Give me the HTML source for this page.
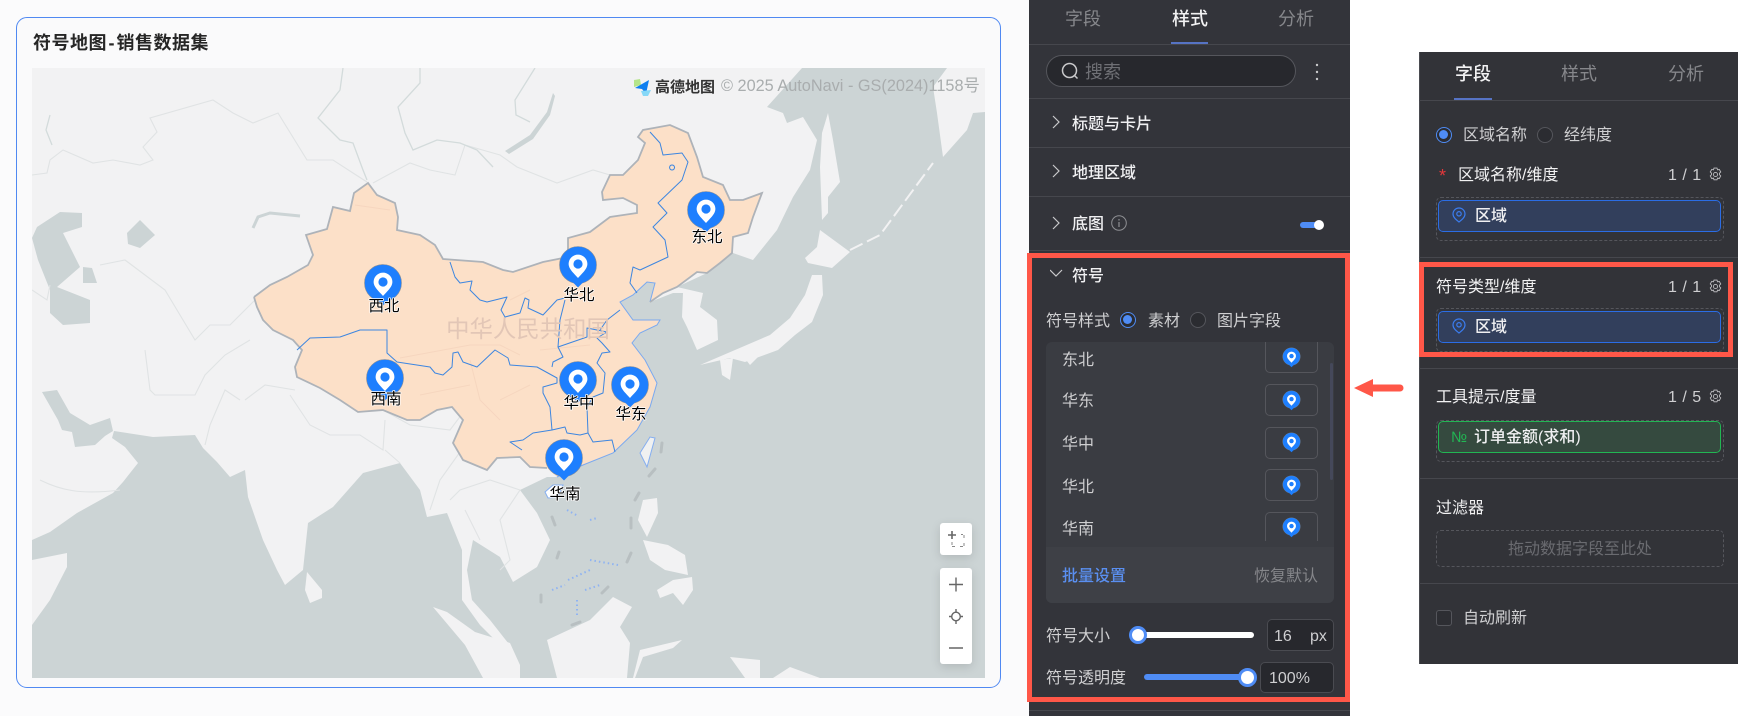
<!DOCTYPE html>
<html lang="zh-CN"><head><meta charset="utf-8"><title>符号地图</title>
<style>
html,body{margin:0;padding:0;background:#fff}
#r{position:relative;width:1738px;height:716px;overflow:hidden;background:#fff;font-family:"Liberation Sans","Noto Sans CJK SC",sans-serif;font-size:16px}
#r div,#r svg{position:absolute}
.t{white-space:nowrap;line-height:24px;height:24px;color:#cfcfd1;margin-top:2px}
.b{color:#f0f0f2;font-weight:500}
.w{color:#f2f2f3}
.s{height:1px;background:#46474d}
.d{border:1px dashed #55565c;border-radius:5px;box-sizing:border-box}
.pill{box-sizing:border-box;border:1px solid #2b6de5;background:#323f5c;border-radius:5px}
.box{box-sizing:border-box;border:1px solid #55565c;border-radius:5px}
.rad{box-sizing:border-box;width:16px;height:16px;border-radius:50%;border:1px solid #55565c;background:#2b2c31}
.on{border:1.500px solid #4f8cf5;background:#2b2c31}
.on:after{content:"";position:absolute;left:2px;top:2px;width:9px;height:9px;border-radius:50%;background:#4f8cf5}
.inp{box-sizing:border-box;background:#27282d;border:1px solid #4a4b51;border-radius:5px}
.thumb{box-sizing:border-box;border-radius:50%;background:#fff;border:3px solid #4f8cf5}
.red{box-sizing:border-box;border:5px solid #ff5748}
.tool{background:#fff;border-radius:3px;box-shadow:0 3px 10px rgba(0,0,0,.13)}
</style></head><body><div id="r">
<svg width="0" height="0" style="left:0;top:0"><defs>
<symbol id="pin" viewBox="-20 -20 40 44" overflow="visible">
<circle r="18.500" fill="#1e7ffe" stroke="#8a8f96" stroke-width=".6"/><path d="M-6 16.500L0 22.500L6 16.500z" fill="#1e7ffe"/>
<path d="M0 -10.400a9.400 9.400 0 0 1 9.400 9.400c0 5.200-6 10-9.400 14c-3.400-4-9.400-8.800-9.400-14a9.400 9.400 0 0 1 9.400-9.400z" fill="#fff"/><circle cy="-1" r="4.600" fill="#1e7ffe"/>
</symbol>
<symbol id="gear" viewBox="0 0 14 14"><path d="M5.600 1h2.800l.5 1.700 1.600-.5 1.400 2.400-1.200 1.200v1.400l1.200 1.200-1.400 2.400-1.600-.5-.5 1.700H5.600l-.5-1.700-1.600.5-1.400-2.400 1.200-1.200V5.800L2.100 4.600l1.400-2.400 1.600.5z" fill="none" stroke="#c2c2c5" stroke-width=".8"/><circle cx="7" cy="7" r="1.900" fill="none" stroke="#c2c2c5" stroke-width=".8"/></symbol>
<symbol id="loc" viewBox="0 0 14 16"><path d="M7 1a6 6 0 0 1 6 6c0 3.500-3.500 6-6 8c-2.500-2-6-4.500-6-8a6 6 0 0 1 6-6z" fill="none" stroke="#3b7df0" stroke-width="1.200"/><circle cx="7" cy="6.800" r="2.200" fill="none" stroke="#3b7df0" stroke-width="1.200"/></symbol>
</defs></svg>

<div style="left:0;top:0;width:1029px;height:716px;background:#fbfbfc"></div>
<div style="left:16px;top:17px;width:985px;height:671px;box-sizing:border-box;border:1.500px solid #5089f2;border-radius:11px;background:#fafafb"></div>
<div class="t" style="left:33px;top:29px;font-size:18px;font-weight:700;color:#262626;letter-spacing:.5px">符号地图<span style="margin:0 1.500px">-</span>销售数据集</div>

<svg style="left:32px;top:68px" width="953" height="610" viewBox="32 68 953 610">
<rect x="32" y="68" width="953" height="610" fill="#ccd4d5"/>
<g fill="#f2f2f3">
<path d="M32 68H802L767 107L783 113L787 123L803 117L817 140L810 170L793 197L777 230L753 260L733 253L707 273L677 287L703 293L700 307L717 320L718 340L697 350L687 327L682 317L683 293L673 293L650 302L655 283L647 282L633 295L620 302L633 320L660 320L657 325L640 333L632 343L645 360L657 383L650 407L637 430L613 453L583 465L557 477L547 477L520 490L537 513L550 540L537 567L513 582L500 557L473 540L467 570L472 600L490 620L512 648L505 650L480 625L462 600L462 550L447 513L427 517L420 490L400 463L363 473L333 507L308 523L303 570L285 585L277 570L263 540L248 497L245 470L230 477L217 462L203 448L195 435L153 437L114 431L112 438L125 447L138 463L123 482L113 493L77 513L50 532L32 540z"/>
<path d="M947 68H985V112L973 113L967 130L943 157L937 113L933 87z"/>
<path d="M32 560L67 553L67 567L50 600L32 625z"/>
<path d="M307 572L322 590L322 598L310 603L305 590z"/>
<path d="M433 607L447 612L475 632L510 643L520 665L520 678H483L465 645z"/>
<path d="M828 113L833 140L840 182L828 197L828 213L822 220L820 167L822 133z"/>
<path d="M820 230L850 252L832 268L808 263L805 258L817 247z"/>
<path d="M822 275L823 295L812 322L795 335L778 350L745 362L730 358L700 365L735 350L770 335L790 318L805 295L812 275z"/>
<path d="M720 360L733 358L730 380L722 375z"/><path d="M740 352L765 350L750 365z"/>
<path d="M643 500L657 498L658 513L647 537L638 520z"/><path d="M643 540L668 545L685 555L688 575L665 570L650 560z"/>
<path d="M657 590L673 580L692 577L693 590L683 605L673 593L660 598z"/>
<path d="M547 640L590 620L613 597L632 607L620 627L630 643L627 678H557z"/>
<path d="M640 650L682 640L673 648L643 657L635 678H633z"/>
<path d="M730 657L760 660L760 678H745z"/><path d="M773 678L790 667L820 678z"/>
<path d="M850 250L880 235L933 163" fill="none" stroke="#f2f2f3" stroke-width="2" stroke-dasharray="14 5"/>
</g>
<g fill="#ccd4d5">
<path d="M32 238L37 227L60 212L82 213L82 227L63 233L80 267L57 287L90 300L90 323L63 325L50 313L50 290L38 260z"/>
<path d="M127 233L140 220L155 235L140 248L128 244z"/><path d="M83 267L92 268L97 283H83z"/>
<path d="M42 392L57 390L70 413L90 425L110 418L113 431L105 436L95 445L75 447L72 432L62 430L58 420z"/>
<path d="M553 93L555 96L550 115L533 139L509 154L505 151L530 135L547 112z"/>
</g>
<g fill="none" stroke="#e0e3e4" stroke-width="1.100">
<path d="M32 175L47 173L50 160L63 150L93 163L113 160L140 165L153 160L143 147L157 132L150 118L213 100L233 113L253 123L278 113L307 160L333 160L353 173L367 182"/>
<path d="M373 183L410 163L430 170L455 175L465 145L500 155L517 167L557 183L593 170L610 175"/>
<path d="M32 290L47 300L50 285M100 265L125 260L145 275L165 290L195 340L210 325L230 325L255 300"/>
<path d="M145 350L150 390L155 395L195 395L205 375L225 355L250 340M240 400L225 390L210 425L205 445M245 400L265 385L295 390"/>
<path d="M290 395L310 425L330 435L360 435L383 450L385 420M383 410L410 425L450 430L465 410M385 450L400 463M465 445L440 480L430 510M450 500L460 490L490 480L520 490L500 520L510 560L500 570M465 510L480 540"/>
<path d="M40 480C60 490 80 495 120 490"/>
</g>
<g fill="none" stroke="#d3dbdb" stroke-width="1.300">
<path d="M343 68L340 90L318 118L340 140L353 143L363 170L367 180"/>
<path d="M420 68L420 83L398 107L405 133L413 150L437 140L460 143L477 150L493 167"/>
<path d="M535 68L515 100L516 115L530 122M50 115L46 130L52 145"/>
</g>
<path d="M253 228L258 217L270 213L300 216" fill="none" stroke="#ccd4d5" stroke-width="3"/>
<path id="cn" d="M254 297L270 285L287 277L308 265L313 255L306 235L327 229L333 207L350 211L354 193L368 183L377 195L395 203L398 217L397 230L420 235L435 245L443 259L483 262L503 270L513 272L543 262L568 257L568 238L590 232L610 217L637 213L637 205L623 198L603 200L602 192L610 175L623 175L638 160L645 143L638 137L643 130L670 125L688 133L697 157L703 177L723 185L730 200L743 200L762 193L753 217L748 233L733 237L732 253L720 263L707 273L697 272L677 287L663 293L650 302L655 283L647 282L633 295L620 302L633 320L660 320L657 325L640 333L632 343L645 360L657 383L650 407L637 430L613 453L583 465L557 477L547 468L530 467L520 457L497 458L487 470L463 460L453 443L463 420L452 407L437 410L420 420L407 420L383 410L358 412L340 400L320 388L297 377L295 367L302 350L293 340L273 330L263 320L257 307z" fill="#fce0c8"/>
<g fill="none" stroke="#f6d6bf" stroke-width="1">
<path d="M355 205L390 210M400 358L470 345L500 345L520 355M470 360L480 400L500 420M530 290L510 300M420 395L470 385M540 350L590 345M500 400L530 385"/>
</g>
<path d="M645 360L657 383L650 407L637 430L613 453L583 465L557 477M650 302L655 283L647 282L633 295L620 302L633 320L660 320L657 325L640 333L632 343L645 360" fill="none" stroke="#7aa9f0" stroke-width="1"/>
<path d="M254 297L270 285L287 277L308 265L313 255L306 235L327 229L333 207L350 211L354 193L368 183L377 195L395 203L398 217L397 230L420 235L435 245L443 259L483 262L503 270L513 272L543 262L568 257L568 238L590 232L610 217L637 213L637 205L623 198L603 200L602 192L610 175L623 175L638 160L645 143L638 137L643 130L670 125L688 133L697 157L703 177L723 185L730 200L743 200L762 193L753 217L748 233L733 237L732 253L720 263L707 273L697 272L677 287L663 293L650 302M547 468L530 467L520 457L497 458L487 470L463 460L453 443L463 420L452 407L437 410L420 420L407 420L383 410L358 412L340 400L320 388L297 377L295 367L302 350L293 340L273 330L263 320L257 307L254 297" fill="none" stroke="#aeb3b9" stroke-width="1.800"/>
<g fill="none" stroke="#3d86e0" stroke-width="1" stroke-linejoin="round">
<path d="M450 262L455 277L460 283L472 281L470 290L480 300L487 302L507 297L501 310L505 317L520 313L525 298L529 300L528 308L543 315L557 300L565 298"/>
<path d="M565 300L560 320L558 347L563 357L553 362L552 367"/>
<path d="M558 347L587 337L587 328L597 330L607 332L597 338L602 343L610 352L602 353L597 363L605 373L603 393L593 397L587 407L588 433L593 442L612 440L615 452"/>
<path d="M600 330L607 320L620 310"/>
<path d="M297 350L310 338L340 337L360 330L387 330L387 353L397 362L430 367L435 373L443 375L452 367L453 353L458 352L463 362L477 367L495 350L508 358L510 365L537 367L557 378L557 383L543 387L543 393L550 407L552 430L533 433L523 440L510 442L522 450"/>
<path d="M552 430L565 427L567 433L580 435L588 433"/>
<path d="M650 132L660 143L663 155L682 153L688 162L682 180L658 203L667 213L653 227L665 240L668 257L640 270L633 267L630 283L637 293"/>
<path d="M672 165a2.500 2.500 0 1 0 .1 0z"/>
</g>
<path d="M640 453L650 437L655 438L647 467z" fill="#f0f1f1" stroke="#85aef0" stroke-width="1"/>
<path d="M545 492L553 485L563 485L558 497L548 498z" fill="#fff" stroke="#85aef0" stroke-width="1"/>
<g stroke="#b8bfc1" stroke-width="3" stroke-linecap="round"><path d="M662 443L661 452M655 469L649 476M639 493L635 500M631 518V528M631 553L627 562M608 587L602 593M580 622L572 625M541 595V602M559 552L557 558M552 517L555 525"/></g>
<g fill="none" stroke="#8fb3f2" stroke-width="2" stroke-dasharray="1.500 3"><path d="M567 510L578 516M590 520L597 518M590 560L618 565M585 590L600 585M552 590L565 585M568 580L590 570M577 600V615"/></g>
<text x="528" y="337" text-anchor="middle" font-size="23.400" fill="#e2c6b6" font-family="Liberation Sans,Noto Sans CJK SC,sans-serif">中华人民共和国</text>
<use href="#pin" x="363" y="263" width="40" height="44"/><use href="#pin" x="686" y="190" width="40" height="44"/><use href="#pin" x="558" y="245" width="40" height="44"/><use href="#pin" x="365" y="358" width="40" height="44"/><use href="#pin" x="558" y="360" width="40" height="44"/><use href="#pin" x="610" y="365" width="40" height="44"/><use href="#pin" x="544" y="438" width="40" height="44"/>
<g font-family="Liberation Sans,Noto Sans CJK SC,sans-serif" font-size="15.500" fill="#000" text-anchor="middle" stroke="#fff" stroke-width="1.500" paint-order="stroke" stroke-linejoin="round">
<text x="384" y="311">西北</text><text x="707" y="242">东北</text><text x="579" y="300">华北</text><text x="386" y="404">西南</text><text x="579" y="408">华中</text><text x="631" y="419">华东</text><text x="565" y="499">华南</text>
</g>
<path d="M634 80L640 79L641 85L634 87z" fill="#b5e58a"/><path d="M635 88L649 80L646 94L642 89z" fill="#0f7ff0"/><path d="M641 91L651 90L648 96H643z" fill="#86d8f7"/>
<text x="655" y="92" font-size="15" font-weight="700" fill="#333" font-family="Liberation Sans,Noto Sans CJK SC,sans-serif">高德地图</text>
<text x="721" y="91" font-size="16.300" fill="#a9adae" font-family="Liberation Sans,Noto Sans CJK SC,sans-serif">© 2025 AutoNavi - GS(2024)1158号</text>
</svg>

<div class="tool" style="left:940px;top:523px;width:32px;height:32px"></div>
<svg style="left:940px;top:523px" width="32" height="32"><path d="M8 12h8M12 8v8" stroke="#666" stroke-width="1.600"/><path d="M12 19v4.500h4M20 23.500h4V19M24 15v-3.500h-3" fill="none" stroke="#888" stroke-width="1" stroke-dasharray="3 1.500"/></svg>
<div class="tool" style="left:940px;top:568px;width:32px;height:96px"></div>
<svg style="left:940px;top:568px" width="32" height="96"><path d="M9 16.500h14M16 9.500v14M9 80h14" stroke="#666" stroke-width="1.400" fill="none"/><circle cx="16" cy="48.500" r="4.300" fill="none" stroke="#666" stroke-width="1.400"/><path d="M16 41v3M16 53v3M9 48.500h3M20 48.500h3" stroke="#666" stroke-width="1.400"/></svg>

<!-- panel 1 -->
<div style="left:1029px;top:0;width:321px;height:716px;background:#33343a"></div>
<div class="t" style="left:1065px;top:5px;font-size:18px;color:#86878b">字段</div>
<div class="t" style="left:1172px;top:5px;font-size:18px;color:#f2f2f3;font-weight:500">样式</div>
<div class="t" style="left:1278px;top:5px;font-size:18px;color:#86878b">分析</div>
<div class="s" style="left:1029px;top:44px;width:321px"></div>
<div style="left:1171px;top:42px;width:37px;height:2px;background:#5673c4"></div>
<div style="left:1046px;top:55px;width:250px;height:32px;box-sizing:border-box;border:1px solid #55565c;border-radius:16px;background:#27282d"></div>
<svg style="left:1060px;top:61px" width="20" height="20"><circle cx="9.500" cy="9.500" r="7" fill="none" stroke="#c9c9cb" stroke-width="1.500"/><path d="M14.500 14.500L17.500 17.500" stroke="#c9c9cb" stroke-width="1.500"/></svg>
<div class="t" style="left:1085px;top:58px;font-size:18px;color:#6f7075">搜索</div>
<svg style="left:1314px;top:62px" width="6" height="20"><circle cx="3" cy="3" r="1.200" fill="#c9c9cb"/><circle cx="3" cy="10" r="1.200" fill="#c9c9cb"/><circle cx="3" cy="17" r="1.200" fill="#c9c9cb"/></svg>
<div class="s" style="left:1029px;top:98px;width:321px"></div>
<div class="s" style="left:1029px;top:147px;width:321px"></div>
<div class="s" style="left:1029px;top:196px;width:321px"></div>
<div class="s" style="left:1029px;top:250px;width:321px"></div>
<div class="s" style="left:1029px;top:710px;width:321px"></div>
<svg style="left:1050px;top:112px" width="14" height="180" fill="none" stroke="#c9c9cb" stroke-width="1.200"><path d="M3 4l6 6-6 6M3 53l6 6-6 6M3 105l6 6-6 6M0 158l6 6 6-6"/></svg>
<div class="t b" style="left:1072px;top:111px">标题与卡片</div>
<div class="t b" style="left:1072px;top:160px">地理区域</div>
<div class="t b" style="left:1072px;top:211px">底图</div>
<svg style="left:1110px;top:214px" width="18" height="18"><circle cx="9" cy="9" r="7.300" fill="none" stroke="#8f9094" stroke-width="1"/><path d="M9 8v5M9 5v1.500" stroke="#8f9094" stroke-width="1.200"/></svg>
<div style="left:1300px;top:222px;width:20px;height:6px;border-radius:3px;background:#4f8cf5"></div>
<div style="left:1314px;top:220px;width:10px;height:10px;border-radius:50%;background:#fff"></div>
<div class="t b" style="left:1072px;top:263px">符号</div>
<div class="t" style="left:1046px;top:308px">符号样式</div>
<div class="rad on" style="left:1120px;top:312px"></div>
<div class="t" style="left:1148px;top:308px">素材</div>
<div class="rad" style="left:1190px;top:312px"></div>
<div class="t" style="left:1217px;top:308px">图片字段</div>

<div style="left:1046px;top:342px;width:288px;height:261px;background:#3a3c42;border-radius:6px"></div>
<div style="left:1046px;top:342px;width:288px;height:205px;overflow:hidden">
<div class="t" style="left:16px;top:5px">东北</div>
<div class="t" style="left:16px;top:46px">华东</div>
<div class="t" style="left:16px;top:89px">华中</div>
<div class="t" style="left:16px;top:132px">华北</div>
<div class="t" style="left:16px;top:174px">华南</div>
<div class="box" style="left:219px;top:-20px;width:53px;height:51px"></div>
<div class="box" style="left:219px;top:42px;width:53px;height:32px"></div>
<div class="box" style="left:219px;top:85px;width:53px;height:32px"></div>
<div class="box" style="left:219px;top:127px;width:53px;height:32px"></div>
<div class="box" style="left:219px;top:170px;width:53px;height:29px;border-radius:5px 5px 0 0;border-bottom:0"></div>
<svg style="left:236px;top:5px" width="19" height="21"><use href="#pin" width="19" height="21"/></svg>
<svg style="left:236px;top:48px" width="19" height="21"><use href="#pin" width="19" height="21"/></svg>
<svg style="left:236px;top:90px" width="19" height="21"><use href="#pin" width="19" height="21"/></svg>
<svg style="left:236px;top:133px" width="19" height="21"><use href="#pin" width="19" height="21"/></svg>
<svg style="left:236px;top:175px" width="19" height="21"><use href="#pin" width="19" height="21"/></svg>
<div style="left:284px;top:21px;width:3px;height:117px;background:#45485a;border-radius:2px"></div>
</div>
<div style="left:1046px;top:547px;width:288px;height:56px;background:#3e4046;border-radius:0 0 6px 6px"></div>
<div class="t" style="left:1062px;top:563px;color:#5a8ff0;font-weight:500">批量设置</div>
<div class="t" style="left:1254px;top:563px;color:#85868a">恢复默认</div>

<div class="t" style="left:1046px;top:623px">符号大小</div>
<div style="left:1129px;top:632px;width:10px;height:6px;background:#4f8cf5;border-radius:3px"></div>
<div style="left:1136px;top:632px;width:118px;height:6px;background:#fff;border-radius:3px"></div>
<div class="thumb" style="left:1129px;top:626px;width:18px;height:18px"></div>
<div class="inp" style="left:1267px;top:619px;width:67px;height:32px"></div>
<div class="t" style="left:1274px;top:623px">16</div>
<div class="t" style="left:1310px;top:623px">px</div>

<div class="t" style="left:1046px;top:665px">符号透明度</div>
<div style="left:1144px;top:674px;width:100px;height:6px;background:#4f8cf5;border-radius:3px"></div>
<div class="thumb" style="left:1238px;top:668px;width:19px;height:19px"></div>
<div class="inp" style="left:1260px;top:662px;width:74px;height:31px"></div>
<div class="t" style="left:1269px;top:665px">100%</div>
<div class="red" style="left:1027px;top:253px;width:323px;height:449px"></div>

<!-- arrow -->
<svg style="left:1352px;top:376px" width="54" height="24"><path d="M2 12L21 3V21z" fill="#ff5748"/><path d="M18 12H48" stroke="#ff5748" stroke-width="7" stroke-linecap="round"/></svg>

<!-- panel 2 -->
<div style="left:1419px;top:52px;width:319px;height:612px;background:#323338"></div>
<div style="left:1419px;top:52px;width:1px;height:612px;background:#4a4b50"></div>
<div class="t" style="left:1455px;top:60px;font-size:18px;color:#f2f2f3;font-weight:500">字段</div>
<div class="t" style="left:1561px;top:60px;font-size:18px;color:#86878b">样式</div>
<div class="t" style="left:1668px;top:60px;font-size:18px;color:#86878b">分析</div>
<div class="s" style="left:1419px;top:100px;width:319px"></div>
<div style="left:1454px;top:98px;width:38px;height:2px;background:#5673c4"></div>
<div class="rad on" style="left:1436px;top:127px"></div>
<div class="t" style="left:1463px;top:122px">区域名称</div>
<div class="rad" style="left:1537px;top:127px"></div>
<div class="t" style="left:1564px;top:122px">经纬度</div>

<div class="t" style="left:1439px;top:162px;color:#e5373a;font-size:18px">*</div>
<div class="t w" style="left:1458px;top:162px">区域名称/维度</div>
<div class="t" style="left:1668px;top:162px;word-spacing:1px">1 / 1</div>
<svg style="left:1708px;top:167px" width="15" height="15"><use href="#gear" width="15" height="15"/></svg>
<div class="d" style="left:1436px;top:197px;width:288px;height:44px"></div>
<div class="pill" style="left:1438px;top:200px;width:283px;height:32px"></div>
<svg style="left:1452px;top:207px" width="14" height="16"><use href="#loc" width="14" height="16"/></svg>
<div class="t b" style="left:1475px;top:203px">区域</div>
<div class="s" style="left:1419px;top:257px;width:319px"></div>

<div class="t w" style="left:1436px;top:274px">符号类型/维度</div>
<div class="t" style="left:1668px;top:274px;word-spacing:1px">1 / 1</div>
<svg style="left:1708px;top:279px" width="15" height="15"><use href="#gear" width="15" height="15"/></svg>
<div class="d" style="left:1436px;top:308px;width:288px;height:44px"></div>
<div class="pill" style="left:1438px;top:311px;width:283px;height:32px"></div>
<svg style="left:1452px;top:318px" width="14" height="16"><use href="#loc" width="14" height="16"/></svg>
<div class="t b" style="left:1475px;top:314px">区域</div>
<div class="red" style="left:1419px;top:262px;width:314px;height:95px"></div>
<div class="s" style="left:1419px;top:368px;width:319px"></div>

<div class="t w" style="left:1436px;top:384px">工具提示/度量</div>
<div class="t" style="left:1668px;top:384px;word-spacing:1px">1 / 5</div>
<svg style="left:1708px;top:389px" width="15" height="15"><use href="#gear" width="15" height="15"/></svg>
<div class="d" style="left:1436px;top:420px;width:288px;height:42px"></div>
<div class="pill" style="left:1438px;top:421px;width:283px;height:32px;background:#354a3f;border-color:#22b653"></div>
<div class="t" style="left:1451px;top:424px;color:#22b653;font-size:15px">№</div>
<div class="t b" style="left:1474px;top:424px">订单金额(求和)</div>
<div class="s" style="left:1419px;top:478px;width:319px"></div>

<div class="t w" style="left:1436px;top:495px">过滤器</div>
<div class="d" style="left:1436px;top:530px;width:288px;height:37px"></div>
<div class="t" style="left:1508px;top:536px;color:#6a6b70">拖动数据字段至此处</div>
<div class="s" style="left:1419px;top:583px;width:319px"></div>
<div style="left:1436px;top:610px;width:16px;height:16px;box-sizing:border-box;border:1px solid #55565c;border-radius:3px;background:#2d2e33"></div>
<div class="t" style="left:1463px;top:605px">自动刷新</div>
</div></body></html>
